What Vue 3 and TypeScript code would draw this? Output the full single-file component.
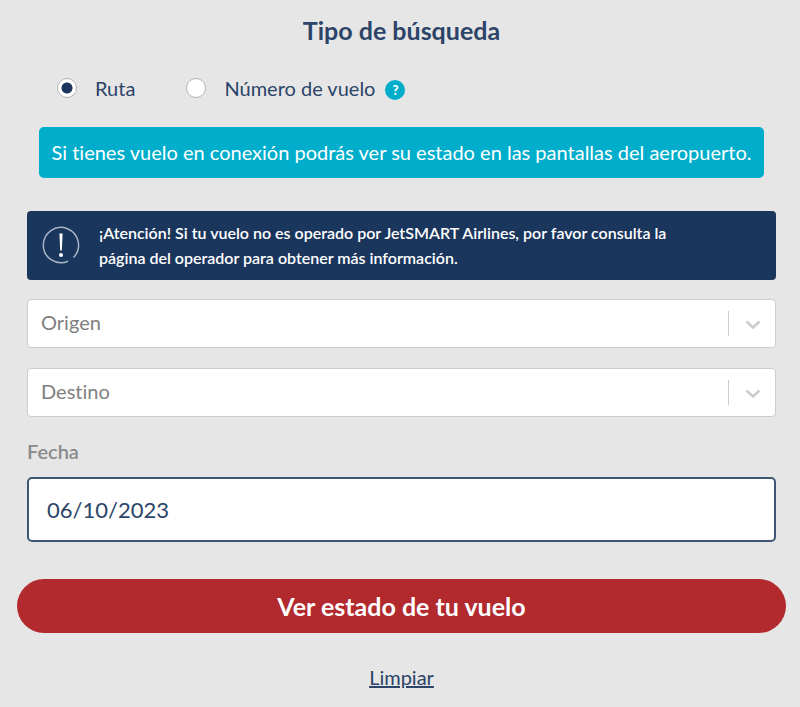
<script setup lang="ts">
import { ref } from 'vue'

const mode = ref<'ruta' | 'numero'>('ruta')
const origen = ref('')
const destino = ref('')
const fecha = ref('06/10/2023')

function limpiar() {
  origen.value = ''
  destino.value = ''
}
</script>

<template>
  <form class="search" @submit.prevent>
    <h2 class="title">Tipo de búsqueda</h2>
    <div class="modes">
      <label class="mode"><input v-model="mode" type="radio" name="mode" value="ruta" />Ruta</label>
      <label class="mode"><input v-model="mode" type="radio" name="mode" value="numero" />Número de vuelo</label>
      <button type="button" class="help">?</button>
    </div>
    <p class="info">Si tienes vuelo en conexión podrás ver su estado en las pantallas del aeropuerto.</p>
    <div class="alert">
      <svg class="alert-icon" viewBox="0 0 38 38" aria-hidden="true">
        <path class="ring" d="M26 35.2A17.6 17.6 0 1 1 31.5 31.4" />
        <path class="mark" d="M17.4 7.5h3.2l-.8 17h-1.6z" />
        <circle class="mark" cx="19" cy="29" r="2" />
      </svg>
      <p class="alert-text">¡Atención! Si tu vuelo no es operado por JetSMART Airlines, por favor consulta la página del operador para obtener más información.</p>
    </div>
    <div class="pickers">
      <div class="picker">
        <select v-model="origen" aria-label="Origen"><option value="">Origen</option></select>
        <span class="indicator"><svg viewBox="0 0 20 20" aria-hidden="true"><path d="M3.5 7.5l6.5 6 6.5-6" /></svg></span>
      </div>
      <div class="picker">
        <select v-model="destino" aria-label="Destino"><option value="">Destino</option></select>
        <span class="indicator"><svg viewBox="0 0 20 20" aria-hidden="true"><path d="M3.5 7.5l6.5 6 6.5-6" /></svg></span>
      </div>
    </div>
    <label class="date-label" for="fecha">Fecha</label>
    <input id="fecha" v-model="fecha" class="date" type="text" />
    <button class="submit" type="submit">Ver estado de tu vuelo</button>
    <a class="clear" href="#" @click.prevent="limpiar">Limpiar</a>
  </form>
</template>

<style>
body {
  background: #e6e6e6;
}
</style>

<style scoped>
.search {
  display: flex;
  flex-direction: column;
  padding: 15px 24px 16px 27px;
  font-family: Lato, "Liberation Sans", sans-serif;
  font-size: 20px;
  line-height: 24px;
  font-variant-ligatures: none;
  color: #2b4468;
}
.title {
  margin: 0;
  font-size: 25px;
  line-height: 30px;
  font-weight: 700;
  text-align: center;
}
.modes {
  display: flex;
  align-items: center;
  margin: 30px 0 0 30px;
}
.mode {
  display: flex;
  align-items: center;
  gap: 18px;
  margin-right: 51px;
}
.mode:nth-child(2) {
  margin-right: 10px;
}
.mode input {
  appearance: none;
  box-sizing: border-box;
  width: 20px;
  height: 20px;
  margin: 0;
  border: 1px solid #b4b4b4;
  border-radius: 50%;
  background: #fff;
}
.mode input:checked {
  background: radial-gradient(circle, #1b365d 5px, #fff 6px);
}
.help {
  width: 20px;
  height: 20px;
  margin-top: 5px;
  padding: 0;
  border: 0;
  border-radius: 50%;
  background: #00aecb;
  color: #fff;
  font: 900 13px/20px Lato, sans-serif;
}
.info {
  margin: 27px 12px 0;
  padding: 13px 0 14px;
  border-radius: 5px;
  background: #00aecb;
  color: #fff;
  text-align: center;
}
.alert {
  display: flex;
  align-items: center;
  gap: 19px;
  margin-top: 33px;
  padding: 9px 90px 10px 15px;
  border-radius: 4px;
  background: #1b365d;
  color: #fff;
}
.alert-icon {
  flex: none;
  width: 38px;
  height: 38px;
}
.ring {
  fill: none;
  stroke: #a9b5c7;
  stroke-width: 1.5;
}
.mark {
  fill: #fff;
}
.alert-text {
  margin: 0;
  font-size: 16px;
  line-height: 25px;
  font-weight: 600;
}
.pickers {
  display: grid;
  gap: 20px;
  margin-top: 19px;
}
.picker {
  position: relative;
  display: flex;
}
.picker select {
  appearance: none;
  box-sizing: border-box;
  width: 100%;
  height: 49px;
  padding: 0 13px 3px;
  border: 1px solid #ccc;
  border-radius: 4px;
  background: #fff;
  color: #808080;
  font: inherit;
}
.indicator {
  position: absolute;
  top: 12px;
  right: 13px;
  display: flex;
  align-items: center;
  height: 25px;
  padding-left: 14px;
  border-left: 1px solid #ccc;
  pointer-events: none;
}
.indicator svg {
  width: 20px;
  height: 20px;
  fill: none;
  stroke: #ccc;
  stroke-width: 2.5;
}
.date-label {
  margin-top: 22px;
  color: #8a8a8a;
  font-weight: 600;
}
.date {
  box-sizing: border-box;
  width: 100%;
  height: 65px;
  margin-top: 14px;
  padding: 0 18px;
  border: 2px solid #3e5675;
  border-radius: 5px;
  background: #fff;
  color: #2b4468;
  font: inherit;
  font-size: 22px;
}
.submit {
  height: 54px;
  margin: 37px -10px 0;
  border: 0;
  border-radius: 27px;
  background: #b2292e;
  color: #fff;
  font: 700 25px/30px Lato, sans-serif;
}
.clear {
  align-self: center;
  margin-top: 32px;
}
.clear,
.clear:visited {
  color: #2b4468;
}
</style>
